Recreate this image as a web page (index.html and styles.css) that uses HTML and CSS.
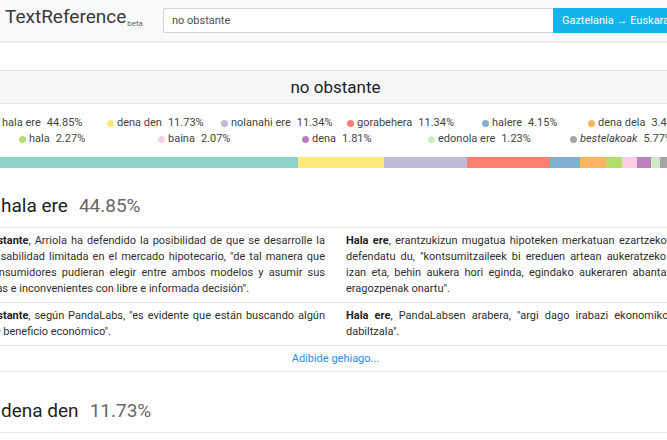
FILE: index.html
```html
<!DOCTYPE html>
<html lang="es">
<head>
<meta charset="utf-8">
<title>TextReference</title>
<link rel="stylesheet" href="styles.css">
</head>
<body>
<nav class="navbar">
  <div class="brand">TextReference<sub class="beta">beta</sub></div>
  <form class="search">
    <input class="search-input" type="text" value="no obstante">
    <button class="search-btn" type="button">Gaztelania → Euskara</button>
  </form>
</nav>

<main class="page">
  <div class="word-bar">no obstante</div>

  <div class="legend">
    <div class="legend-row row1">
      <div class="item"><span class="dot c1"></span><span class="name">hala ere</span><span class="pct">44.85%</span></div>
      <div class="item"><span class="dot c2"></span><span class="name">dena den</span><span class="pct">11.73%</span></div>
      <div class="item"><span class="dot c3"></span><span class="name">nolanahi ere</span><span class="pct">11.34%</span></div>
      <div class="item"><span class="dot c4"></span><span class="name">gorabehera</span><span class="pct">11.34%</span></div>
      <div class="item"><span class="dot c5"></span><span class="name">halere</span><span class="pct">4.15%</span></div>
      <div class="item"><span class="dot c6"></span><span class="name">dena dela</span><span class="pct">3.44%</span></div>
    </div>
    <div class="legend-row row2">
      <div class="item"><span class="dot c7"></span><span class="name">hala</span><span class="pct">2.27%</span></div>
      <div class="item"><span class="dot c8"></span><span class="name">baina</span><span class="pct">2.07%</span></div>
      <div class="item"><span class="dot c9"></span><span class="name">dena</span><span class="pct">1.81%</span></div>
      <div class="item"><span class="dot c10"></span><span class="name">edonola ere</span><span class="pct">1.23%</span></div>
      <div class="item"><span class="dot c11"></span><span class="name other">bestelakoak</span><span class="pct">5.77%</span></div>
    </div>
  </div>

  <div class="dist-bar">
    <span class="seg c1" style="width:44.85%"></span>
    <span class="seg c2" style="width:11.73%"></span>
    <span class="seg c3" style="width:11.34%"></span>
    <span class="seg c4" style="width:11.34%"></span>
    <span class="seg c5" style="width:4.15%"></span>
    <span class="seg c6" style="width:3.44%"></span>
    <span class="seg c7" style="width:2.27%"></span>
    <span class="seg c8" style="width:2.07%"></span>
    <span class="seg c9" style="width:1.81%"></span>
    <span class="seg c10" style="width:1.23%"></span>
    <span class="seg c11" style="width:5.77%"></span>
  </div>

  <section class="variant">
    <h2 class="variant-title"><span class="v-name">hala ere</span><span class="v-pct">44.85%</span></h2>
    <div class="example">
      <p class="ex-col">
        <span class="ln"><b>No obstante</b>, Arriola ha defendido la posibilidad de que se desarrolle la</span>
        <span class="ln">responsabilidad limitada en el mercado hipotecario, "de tal manera que</span>
        <span class="ln">los consumidores pudieran elegir entre ambos modelos y asumir sus</span>
        <span class="ln last">ventajas e inconvenientes con libre e informada decisión".</span>
      </p>
      <p class="ex-col">
        <span class="ln"><b>Hala ere</b>, erantzukizun mugatua hipoteken merkatuan ezartzeko aukera</span>
        <span class="ln">defendatu du, "kontsumitzaileek bi ereduen artean aukeratzeko aukera</span>
        <span class="ln">izan eta, behin aukera hori eginda, egindako aukeraren abantailak eta</span>
        <span class="ln last">eragozpenak onartu".</span>
      </p>
    </div>
    <div class="example">
      <p class="ex-col">
        <span class="ln"><b>No obstante</b>, según PandaLabs, "es evidente que están buscando algún</span>
        <span class="ln last">tipo de beneficio económico".</span>
      </p>
      <p class="ex-col">
        <span class="ln"><b>Hala ere</b>, PandaLabsen arabera, "argi dago irabazi ekonomikoen bila</span>
        <span class="ln last">dabiltzala".</span>
      </p>
    </div>
    <div class="more"><a class="more-link" href="#">Adibide gehiago...</a></div>
  </section>

  <section class="variant">
    <h2 class="variant-title"><span class="v-name">dena den</span><span class="v-pct">11.73%</span></h2>
    <div class="example">
      <p class="ex-col">
        <span class="ln"><b>No obstante</b>, el Gobierno mantiene que la medida es necesaria para</span>
        <span class="ln last">garantizar la estabilidad del sistema.</span>
      </p>
      <p class="ex-col">
        <span class="ln"><b>Dena den</b>, Gobernuak dio neurria beharrezkoa dela sistemaren</span>
        <span class="ln last">egonkortasuna bermatzeko.</span>
      </p>
    </div>
  </section>
</main>
</body>
</html>
```

FILE: styles.css
```css
html, body {
  margin: 0;
  padding: 0;
  overflow: hidden;
  background: #fff;
}

body {
  font-family: Roboto, "Liberation Sans", Arial, sans-serif;
  color: #333;
  width: 667px;
  height: 440px;
}

/* ---------- navbar ---------- */
.navbar {
  display: flex;
  align-items: center;
  height: 41px;
  padding-left: 5px;
  background: #f8f9fa;
  border-bottom: 2px solid #eaecee;
  box-sizing: content-box;
  white-space: nowrap;
}

.brand {
  font-size: 19px;
  color: #3a3a3a;
  line-height: 22px;
  flex-shrink: 0;
}

.beta {
  font-size: 8px;
  color: #666;
  vertical-align: -3px;
  margin-left: 1px;
}

.search {
  display: flex;
  margin: 0 0 0 20px;
  flex-shrink: 0;
}

.search-input {
  box-sizing: border-box;
  width: 390px;
  height: 25px;
  border: 1px solid #ced4da;
  border-right: none;
  border-radius: 3px 0 0 3px;
  padding: 0 8px;
  font-family: Roboto, "Liberation Sans", Arial, sans-serif;
  font-size: 11px;
  color: #495057;
  background: #fff;
  outline: none;
}

.search-btn {
  height: 25px;
  border: none;
  background: #12b5ea;
  color: #fff;
  font-family: Roboto, "Liberation Sans", Arial, sans-serif;
  font-size: 11px;
  padding: 0 9px;
  white-space: nowrap;
  flex-shrink: 0;
}

/* ---------- page ---------- */
.page {
  width: 733px;
  margin-left: -31px;
}

.word-bar {
  margin-top: 27px;
  height: 32px;
  line-height: 32px;
  border-top: 1px solid #e6e6e6;
  border-bottom: 1px solid #e6e6e6;
  background: #f7f7f7;
  text-align: center;
  font-size: 17px;
  color: #222;
}

/* ---------- legend ---------- */
.legend {
  margin-top: 11px;
  font-size: 11px;
  line-height: 16px;
  color: #444;
}

.legend-row {
  display: grid;
  white-space: nowrap;
}

.row1 {
  padding-left: 23px;
  grid-template-columns: 115px 114px 126px 135px 106px auto;
}

.row2 {
  padding-left: 50px;
  grid-template-columns: 139px 144px 126px 142px auto;
}

.item {
  display: flex;
  align-items: center;
}

.dot {
  width: 7px;
  height: 7px;
  border-radius: 50%;
  margin-right: 3px;
  flex-shrink: 0;
}

.pct {
  margin-left: 6px;
}

.other {
  font-style: italic;
}

/* ---------- distribution bar ---------- */
.dist-bar {
  display: flex;
  height: 11px;
  margin-top: 10px;
}

.seg {
  display: block;
  height: 100%;
}

.c1 { background: #8dd3c7; }
.c2 { background: #ffe97a; }
.c3 { background: #bebada; }
.c4 { background: #fb8072; }
.c5 { background: #80b1d3; }
.c6 { background: #fdb462; }
.c7 { background: #b3de69; }
.c8 { background: #fccde5; }
.c9 { background: #bc80bd; }
.c10 { background: #ccebc5; }
.c11 { background: #a6a6a6; }

/* ---------- variants ---------- */
.variant-title {
  margin: 0;
  padding: 27px 0 10px 32px;
  font-size: 19px;
  line-height: 22px;
  font-weight: 400;
  border-bottom: 1px solid #e6e6e6;
}

.variant + .variant .variant-title {
  padding-top: 28px;
}

.v-name {
  color: #222;
}

.v-pct {
  color: #666;
  margin-left: 11px;
}

.example {
  display: grid;
  grid-template-columns: 358px 358px;
  column-gap: 21px;
  margin-left: -2px;
  padding: 5px 0 5px;
  border-bottom: 1px solid #e6e6e6;
  font-size: 11px;
  line-height: 16px;
  color: #2f2f2f;
}

.ex-col {
  margin: 0;
}

.ex-col b {
  color: #222;
  font-weight: 700;
}

.ln {
  display: block;
  text-align: justify;
  text-align-last: justify;
  white-space: nowrap;
}

.ln.last {
  text-align-last: left;
}

.more {
  height: 25px;
  line-height: 25px;
  text-align: center;
  font-size: 11px;
  border-bottom: 1px solid #e6e6e6;
}

.more-link {
  color: #2a8cf0;
  text-decoration: none;
}
```
